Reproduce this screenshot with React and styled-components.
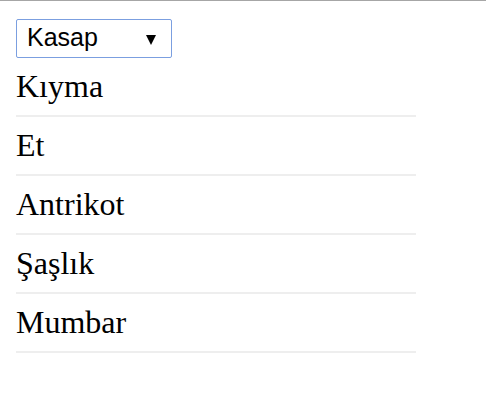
import React from "react";
import styled, { createGlobalStyle } from "styled-components";

const GlobalStyle = createGlobalStyle`
  html, body {
    margin: 0;
    padding: 0;
    background: #ffffff;
  }
  body {
    font-family: "Liberation Serif", "Times New Roman", serif;
  }
`;

const Page = styled.div`
  border-top: 1px solid #a6a6a6;
  padding: 18px 16px 0;
`;

const SelectBox = styled.div`
  box-sizing: border-box;
  width: 156px;
  height: 39px;
  border: 1px solid #7b9fe0;
  border-radius: 2px;
  display: flex;
  align-items: center;
  justify-content: space-between;
  padding: 0 15px 0 10px;
  background: #fff;
  cursor: default;
`;

const SelectValue = styled.span`
  font-family: "Liberation Sans", Arial, sans-serif;
  font-size: 25px;
  color: #000;
  line-height: 1;
  padding-bottom: 2px;
`;

const Arrow = styled.svg`
  width: 10px;
  height: 10px;
  display: block;
  margin-top: 2px;
`;

const List = styled.ul`
  list-style: none;
  margin: 0;
  padding: 0;
  width: 400px;
`;

const Item = styled.li`
  font-size: 32px;
  line-height: 37px;
  color: #000;
  padding: 10px 0;
  border-bottom: 2px solid #eeeeee;
`;

const items = ["Kıyma", "Et", "Antrikot", "Şaşlık", "Mumbar"];

export default function App() {
  return (
    <>
      <GlobalStyle />
      <Page>
        <SelectBox role="combobox" aria-label="Kategori">
          <SelectValue>Kasap</SelectValue>
          <Arrow viewBox="0 0 10 10">
            <polygon points="0,0 10,0 5,10" fill="#000" />
          </Arrow>
        </SelectBox>
        <List>
          {items.map((it) => (
            <Item key={it}>{it}</Item>
          ))}
        </List>
      </Page>
    </>
  );
}
